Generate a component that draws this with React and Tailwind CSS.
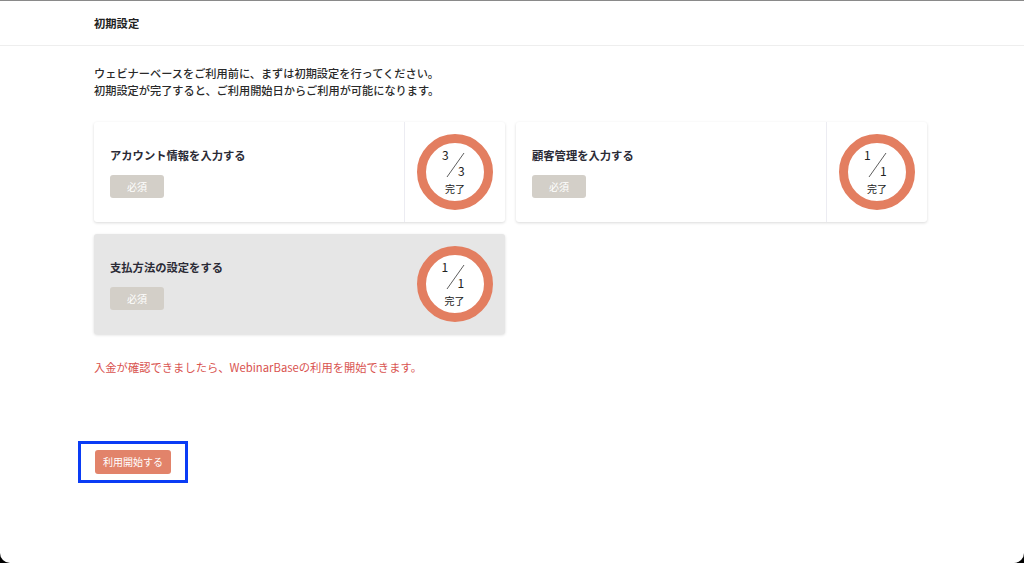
import React from 'react'

const tasks = [
  { title: 'アカウント情報を入力する', done: 3, total: 3 },
  { title: '顧客管理を入力する', done: 1, total: 1 },
  { title: '支払方法の設定をする', done: 1, total: 1, active: true },
]

function Progress({ done, total }) {
  return (
    <div className="w-[76px] h-[76px] rounded-full border-[9px] border-[#e37e60] bg-white flex flex-col items-center justify-center">
      <div className="relative w-[30px] h-[28px] mt-[1px]">
        <span className="absolute left-[2px] top-[-3px] text-[12px] leading-none text-[#222]">{done}</span>
        <svg className="absolute left-0 top-0" width="30" height="28" viewBox="0 0 30 28">
          <line x1="7" y1="25" x2="24" y2="1" stroke="#333" strokeWidth="0.8" />
        </svg>
        <span className="absolute left-[18px] top-[13px] text-[12px] leading-none text-[#222]">{total}</span>
      </div>
      <span className="text-[10px] leading-none text-[#222] mt-[4px]">完了</span>
    </div>
  )
}

function TaskCard({ title, done, total, active }) {
  return (
    <div className={`h-[100px] rounded-[3px] flex shadow-[0_1px_3px_rgba(0,0,0,0.15)] ${active ? 'bg-[#e6e6e6]' : 'bg-white'}`}>
      <div className="flex-1 pl-[16px] pt-[25px]">
        <p className="text-[11.3px] font-bold text-[#2b2b36] leading-[16px]">{title}</p>
        <div className="mt-[12px] w-[54px] h-[23px] rounded-[3px] bg-[#d3cfc8] flex items-center justify-center text-[10px] text-white">必須</div>
      </div>
      <div className={`w-[101px] flex items-center justify-center ${active ? '' : 'border-l border-[#ececf2]'}`}>
        <Progress done={done} total={total} />
      </div>
    </div>
  )
}

export default function App() {
  return (
    <div className="w-[1024px] h-[563px] bg-black overflow-hidden" style={{ fontFamily: '"Noto Sans CJK JP", "Noto Sans", sans-serif' }}>
      <div className="h-full bg-white rounded-b-[10px] border-t border-[#8a8a8a] flex flex-col">
        <div className="h-[45px] border-b border-[#eeeeee] flex items-center pl-[94px]">
          <h1 className="text-[11.3px] font-bold text-[#222]">初期設定</h1>
        </div>
        <div className="pl-[94px] pr-[96px] pt-[19px]">
          <p className="text-[11.2px] font-medium text-[#2a2a2a] leading-[17px]">
            ウェビナーベースをご利用前に、まずは初期設定を行ってください。<br />
            初期設定が完了すると、ご利用開始日からご利用が可能になります。
          </p>
          <div className="grid grid-cols-2 gap-x-[11px] gap-y-[12px] mt-[23px] w-[833px]">
            {tasks.map((t) => (
              <TaskCard key={t.title} {...t} />
            ))}
          </div>
          <p className="mt-[25px] text-[11.3px] text-[#d9534f]">入金が確認できましたら、WebinarBaseの利用を開始できます。</p>
          <div className="mt-[65px] ml-[-16px] w-[110px] h-[42px] border-[3px] border-[#0a3cf5] flex items-center justify-center">
            <button className="w-[76px] h-[24px] rounded-[3px] bg-[#e2836a] text-white text-[10px]">利用開始する</button>
          </div>
        </div>
      </div>
    </div>
  )
}
